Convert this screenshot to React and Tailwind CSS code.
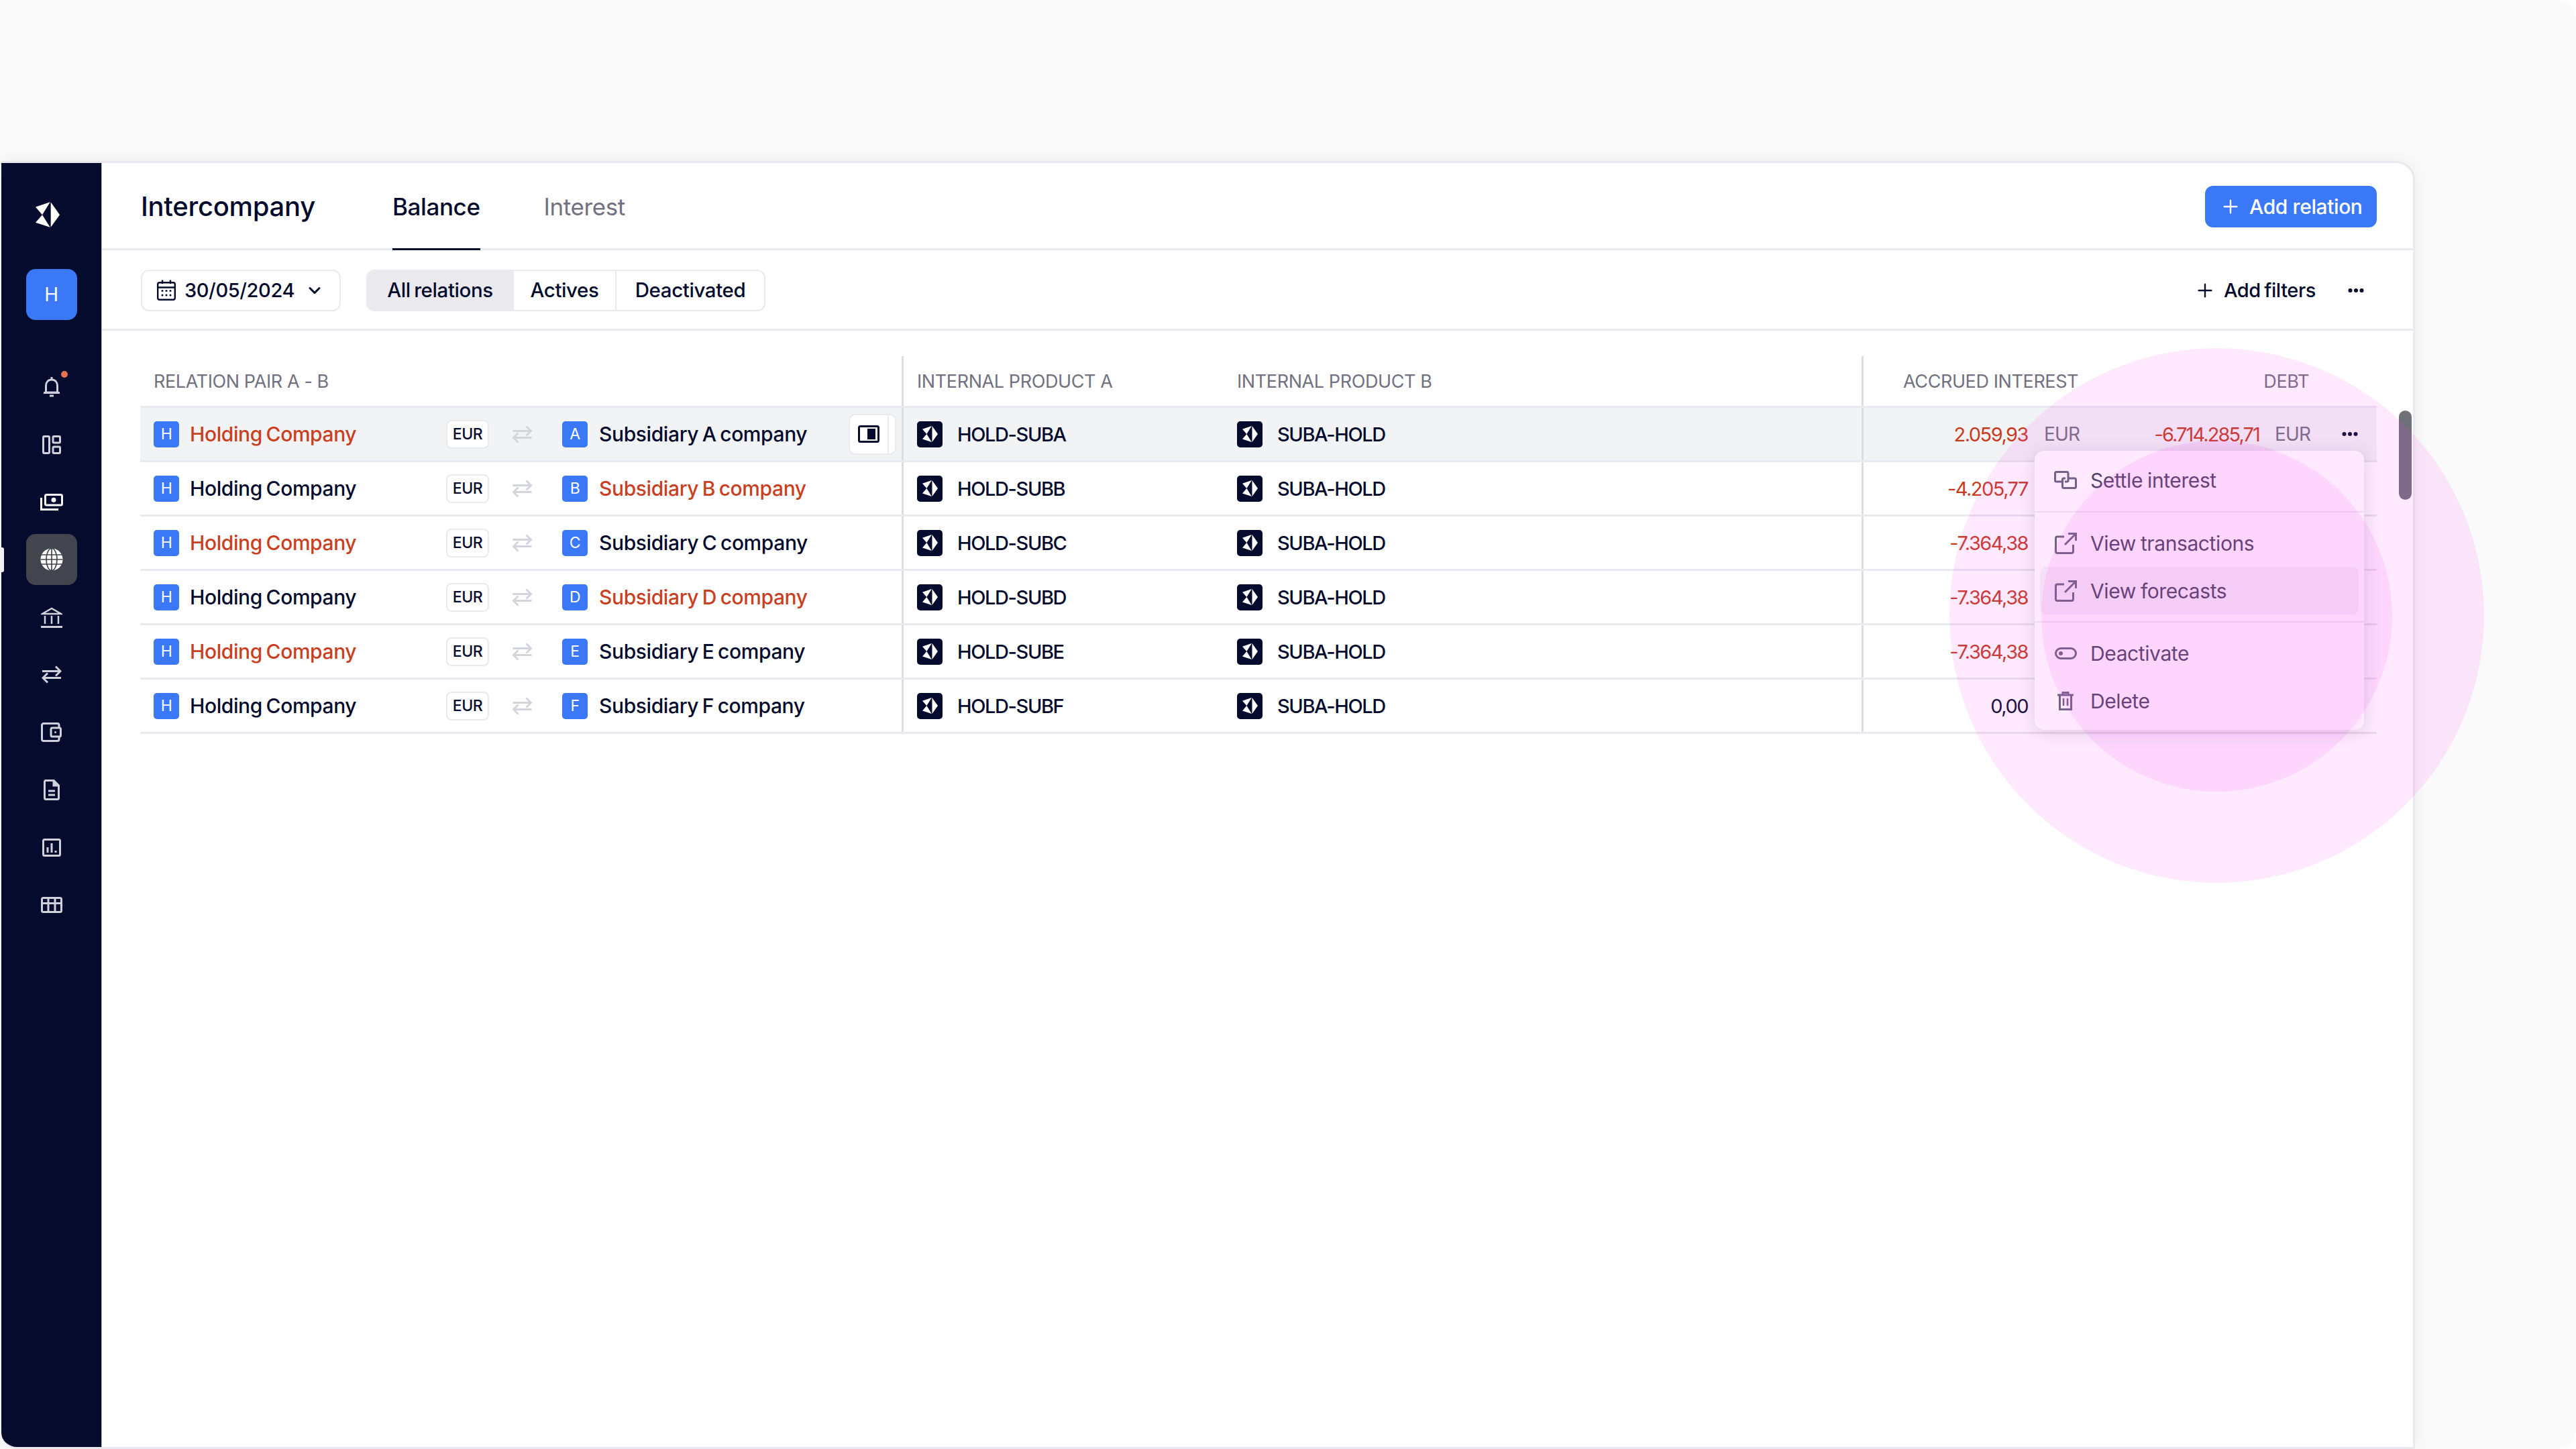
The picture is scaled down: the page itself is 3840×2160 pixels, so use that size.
import { ChevronDown, Plus } from 'lucide-react';

const rows = [
  { letter: 'A', code: 'HOLD-SUBA', redA: true, redB: false, amount: '2.059,93', red: true, hover: true },
  { letter: 'B', code: 'HOLD-SUBB', redA: false, redB: true, amount: '-4.205,77', red: true },
  { letter: 'C', code: 'HOLD-SUBC', redA: true, redB: false, amount: '-7.364,38', red: true },
  { letter: 'D', code: 'HOLD-SUBD', redA: false, redB: true, amount: '-7.364,38', red: true },
  { letter: 'E', code: 'HOLD-SUBE', redA: true, redB: false, amount: '-7.364,38', red: true },
  { letter: 'F', code: 'HOLD-SUBF', redA: false, redB: false, amount: '0,00', red: false },
];

function LogoMark({ className }) {
  return (
    <svg viewBox="0 0 108 113" className={className} fill="currentColor">
      <path d="M68 0L108 57L68 113Z" />
      <path d="M0 22L65 0L30 57Z" />
      <path d="M30 57L65 113L0 92Z" />
    </svg>
  );
}

function Dots({ className }) {
  return (
    <svg viewBox="0 0 24 6" className={className} fill="currentColor">
      <circle cx="3.5" cy="3" r="3" />
      <circle cx="12" cy="3" r="3" />
      <circle cx="20.5" cy="3" r="3" />
    </svg>
  );
}

function SwapArrows({ className }) {
  return (
    <svg viewBox="0 0 30 27" className={className} fill="none" stroke="currentColor" strokeWidth="3">
      <path d="M1 8.5H28M21 1.5L28 8.5L21 15.5" />
      <path d="M29 18.5H2M9 11.5L2 18.5L9 25.5" />
    </svg>
  );
}

function Badge({ children }) {
  return (
    <span className="flex h-[39px] w-[38px] shrink-0 items-center justify-center rounded-[5px] bg-[#3b78f7] text-[23px] font-normal text-white">
      {children}
    </span>
  );
}

function ProductCell({ code }) {
  return (
    <div className="flex items-center">
      <span className="flex h-[39px] w-[38px] shrink-0 items-center justify-center rounded-[5px] bg-[#040b2c] text-white">
        <LogoMark className="h-[24px] w-[23px]" />
      </span>
      <span className="ml-[22px] text-[29px] tracking-[-1.4px] text-[#040b2c]">{code}</span>
    </div>
  );
}

function NavIcon({ children }) {
  return <div className="flex h-[85.8px] w-[76px] items-center justify-center text-[#cfd0da]">{children}</div>;
}

function MenuItem({ icon, label, active }) {
  return (
    <div className={`mx-[8px] flex h-[71px] items-center rounded-[10px] pl-[21px] ${active ? 'bg-[#f4f4f6]' : ''}`}>
      <span className="flex w-[34px] justify-center text-[#5f6678]">{icon}</span>
      <span className="ml-[20px]">{label}</span>
    </div>
  );
}

function ExternalIcon() {
  return (
    <svg width="33" height="32" viewBox="0 0 33 32" fill="none" stroke="currentColor" strokeWidth="3">
      <path d="M14 6H4a2.5 2.5 0 0 0-2.5 2.5V28A2.5 2.5 0 0 0 4 30.500H25a2.500 2.500 0 0 0 2.500-2.500V18" />
      <path d="M15 18L31 2M20 1.500H31.500V12" />
    </svg>
  );
}

export default function App() {
  return (
    <div className="relative h-[2160px] w-[3840px] overflow-hidden rounded-r-[28px] bg-[#fafafa] pl-[2px] pt-[240px] font-[family-name:Inter,sans-serif] text-[30px] leading-none tracking-[-0.4px] text-[#040b2c] [word-spacing:-2px]">
      <div className="relative flex h-[1920px] w-[3598px] overflow-hidden rounded-bl-[24px] rounded-tr-[28px] border-y-[3px] border-r-[3px] border-[#e9e9ef] bg-white shadow-[0_0_24px_rgba(20,20,50,0.06)]">
        {/* sidebar */}
        <aside className="relative flex w-[150px] shrink-0 flex-col items-center border-r border-[#b9bac6] bg-[#040b2c]">
          <LogoMark className="ml-[-12px] mt-[58px] h-[38px] w-[36px] text-white" />
          <div className="mt-[62px] flex h-[76px] w-[76px] items-center justify-center rounded-[14px] bg-[#3b78f7] text-[28px] font-normal text-white">H</div>
          <div className="mt-[57px] flex flex-col">
            <NavIcon>
              <div className="relative">
                <svg width="26" height="32" viewBox="0 0 26 32" fill="none" stroke="currentColor" strokeWidth="3">
                  <path d="M13 5C7.500 5 4.500 9 4.500 14V24H21.500V14C21.500 9 18.500 5 13 5Z" />
                  <path d="M1 24.500H25M13 1V5M10 29H16" />
                </svg>
                <span className="absolute right-[-11px] top-[-8px] h-[10px] w-[10px] rounded-full bg-[#e8734f]" />
              </div>
            </NavIcon>
            <NavIcon>
              <svg width="28" height="28" viewBox="0 0 28 28" fill="none" stroke="currentColor" strokeWidth="3">
                <rect x="1.500" y="1.500" width="9" height="25" rx="1.500" />
                <rect x="16" y="1.500" width="10.500" height="9.500" rx="1.500" />
                <rect x="16" y="17" width="10.500" height="9.500" rx="1.500" />
              </svg>
            </NavIcon>
            <NavIcon>
              <svg width="34" height="25" viewBox="0 0 34 25" fill="none" stroke="#ffffff" strokeWidth="3">
                <rect x="7.500" y="1.500" width="25" height="15.500" rx="2" />
                <circle cx="20" cy="9.300" r="3.500" fill="#ffffff" stroke="none" />
                <path d="M1.500 6V23.500H27" />
              </svg>
            </NavIcon>
            <div className="flex h-[85.8px] w-[76px] items-center justify-center">
              <div className="flex h-[76px] w-[76px] items-center justify-center rounded-[14px] bg-[#42454e]">
                <svg width="34" height="34" viewBox="0 0 34 34" fill="none">
                  <circle cx="17" cy="17" r="16.500" fill="#ffffff" />
                  <g stroke="#42454e" strokeWidth="1.700">
                    <path d="M17 0.500V33.500M2 10H32M0.500 17H33.500M2 24H32" />
                    <ellipse cx="17" cy="17" rx="8" ry="16.500" />
                  </g>
                </svg>
              </div>
            </div>
            <NavIcon>
              <svg width="32" height="31" viewBox="0 0 32 31" fill="none" stroke="currentColor" strokeWidth="2.500">
                <path d="M2 10L16 2L30 10Z" />
                <path d="M6 13V25M16 13V25M26 13V25" />
                <path d="M0 29.500H32" strokeWidth="3" />
              </svg>
            </NavIcon>
            <NavIcon>
              <SwapArrows className="h-[27px] w-[30px]" />
            </NavIcon>
            <NavIcon>
              <svg width="31" height="29" viewBox="0 0 31 29" fill="none" stroke="currentColor" strokeWidth="3">
                <path d="M27 8V4A2.500 2.500 0 0 0 24.500 1.500H4A2.500 2.500 0 0 0 1.500 4V25A2.500 2.500 0 0 0 4 27.500H24.500A2.500 2.500 0 0 0 27 25V21" />
                <rect x="15" y="8" width="14.500" height="13" rx="2" />
                <circle cx="21.500" cy="14.500" r="1.500" fill="currentColor" stroke="none" />
              </svg>
            </NavIcon>
            <NavIcon>
              <svg width="24" height="31" viewBox="0 0 24 31" fill="none" stroke="currentColor" strokeWidth="3">
                <path d="M15 1.500H3A1.500 1.500 0 0 0 1.500 3V28A1.500 1.500 0 0 0 3 29.500H21A1.500 1.500 0 0 0 22.500 28V9Z" />
                <path d="M15 1.500L22.500 9H15Z" fill="currentColor" />
                <path d="M7 17H17M7 23H17" />
              </svg>
            </NavIcon>
            <NavIcon>
              <svg width="28" height="27" viewBox="0 0 28 27" fill="none" stroke="currentColor" strokeWidth="3">
                <rect x="1.500" y="1.500" width="25" height="24" rx="2" />
                <path d="M8 21V13M14 21V7M20 21V18" />
              </svg>
            </NavIcon>
            <NavIcon>
              <svg width="32" height="24" viewBox="0 0 32 24" fill="none" stroke="currentColor" strokeWidth="3">
                <rect x="1.500" y="1.500" width="29" height="21" rx="2" />
                <path d="M1.500 9.500H30.500M11 9.500V22.500M21 9.500V22.500M11 1.500V9.500M21 1.500V9.500" />
              </svg>
            </NavIcon>
          </div>
          <span className="absolute left-0 top-[573px] h-[37px] w-[4px] rounded-r-[3px] bg-[#f0f0f5]" />
        </aside>

        <main className="relative min-w-0 flex-1">
          {/* title + tabs */}
          <div className="flex h-[130px] items-center border-b-[3px] border-[#e9e9ef] pl-[58px] pr-[54px] pt-[3px]">
            <h1 className="w-[375px] text-[40px] font-medium tracking-[-0.3px]">Intercompany</h1>
            <div className="flex h-full items-center text-[35px]">
              <div className="relative flex h-full items-center font-medium">
                Balance
                <span className="absolute inset-x-0 bottom-[-3px] h-[3px] bg-[#040b2c]" />
              </div>
              <div className="ml-[95px] text-[#71717f]">Interest</div>
            </div>
            <button className="ml-auto flex h-[62px] w-[256px] items-center rounded-[12px] bg-[#3b78f7] pl-[22px] font-medium text-white">
              <Plus size={32} strokeWidth={1.8} />
              <span className="ml-[12px]">Add relation</span>
            </button>
          </div>

          {/* toolbar */}
          <div className="flex h-[120px] items-center border-b-[3px] border-[#e9e9ef] pl-[58px] pr-[54px] pt-[2px] text-[29.5px]">
            <div className="flex h-[62px] w-[298px] items-center rounded-[12px] border-[2px] border-[#e9e9ef] pl-[22px]">
              <svg width="28" height="31" viewBox="0 0 28 31" fill="none" stroke="currentColor" strokeWidth="2.400">
                <rect x="1.200" y="4.200" width="25.600" height="25.600" rx="2.500" />
                <path d="M1.200 11.500H26.800M8 0.500V6M20 0.500V6" />
                <g fill="currentColor" stroke="none">
                  <circle cx="8" cy="16.500" r="1.500" />
                  <circle cx="14" cy="16.500" r="1.500" />
                  <circle cx="20" cy="16.500" r="1.500" />
                  <circle cx="8" cy="23" r="1.500" />
                  <circle cx="14" cy="23" r="1.500" />
                  <circle cx="20" cy="23" r="1.500" />
                </g>
              </svg>
              <span className="ml-[13px] text-[29px] font-medium tracking-[-0.4px]">30/05/2024</span>
              <ChevronDown size={28} strokeWidth={2.6} className="ml-[16px]" />
            </div>
            <div className="ml-[38px] flex h-[62px] items-stretch rounded-[12px] border-[2px] border-[#e9e9ef] font-medium">
              <div className="flex w-[216px] items-center justify-center rounded-l-[10px] bg-[#e9e9ee]">All relations</div>
              <div className="flex w-[153px] items-center justify-center border-l-[2px] border-[#e9e9ef]">Actives</div>
              <div className="flex w-[222px] items-center justify-center border-l-[2px] border-[#e9e9ef]">Deactivated</div>
            </div>
            <div className="ml-auto flex items-center text-[29px] font-medium">
              <Plus size={32} strokeWidth={1.8} />
              <span className="ml-[12px]">Add filters</span>
              <Dots className="ml-[48px] mr-[19px] h-[6px] w-[24px]" />
            </div>
          </div>

          {/* table */}
          <div className="ml-[57px] mr-[54px] mt-[38px]">
            <div className="grid h-[74px] grid-cols-[1138px_1431px_1fr] text-[27px] font-normal tracking-[-0.4px] text-[#71717f] [word-spacing:0px]">
              <div className="flex items-center border-r-[3px] border-[#dcdce3] pl-[20px]">RELATION PAIR A - B</div>
              <div className="flex items-center border-r-[3px] border-[#dcdce3] pl-[20px]">
                <span className="w-[477px]">INTERNAL PRODUCT A</span>
                <span>INTERNAL PRODUCT B</span>
              </div>
              <div className="flex items-center pl-[59px]">
                <span>ACCRUED INTEREST</span>
                <span className="ml-auto mr-[101px]">DEBT</span>
              </div>
            </div>

            <div className="border-b-[3px] border-[#e9e9ef]">
              {rows.map((row) => (
                <div
                  key={row.letter}
                  className={`grid h-[81px] grid-cols-[1138px_1431px_1fr] border-t-[3px] border-[#e9e9ef] font-medium ${row.hover ? 'bg-[#f2f3f5]' : ''}`}
                >
                  <div className="flex items-center border-r-[3px] border-[#dcdce3] pl-[20px]">
                    <Badge>H</Badge>
                    <span className={`ml-[16px] w-[382px] ${row.redA ? 'text-[#c8401f]' : ''}`}>Holding Company</span>
                    <span className="flex h-[43px] w-[64px] items-center justify-center rounded-[8px] border-[2px] border-[#e9e9ef] bg-white text-[23px]">EUR</span>
                    <SwapArrows className="ml-[34px] h-[27px] w-[31px] text-[#d4d4dc]" />
                    <span className="ml-[44px]"><Badge>{row.letter}</Badge></span>
                    <span className={`ml-[17px] ${row.redB ? 'text-[#c8401f]' : ''}`}>Subsidiary {row.letter} company</span>
                    {row.hover && (
                      <span className="ml-auto mr-[8px] flex h-[61px] w-[71px] rounded-[10px] border-[2px] border-[#e9e9ef] bg-white">
                        <span className="flex w-[58px] items-center justify-center border-r-[2px] border-[#e9e9ef]">
                          <svg width="32" height="26" viewBox="0 0 32 26" fill="none">
                            <rect x="1.500" y="1.500" width="29" height="23" rx="2" stroke="#040b2c" strokeWidth="3" />
                            <rect x="14" y="5" width="12" height="16" fill="#040b2c" />
                          </svg>
                        </span>
                      </span>
                    )}
                  </div>
                  <div className="flex items-center border-r-[3px] border-[#dcdce3] pl-[20px]">
                    <div className="w-[477px]"><ProductCell code={row.code} /></div>
                    <ProductCell code="SUBA-HOLD" />
                  </div>
                  <div className="flex items-center text-[29px] font-normal tracking-[-1.5px]">
                    <span className={`w-[245px] text-right ${row.red ? 'text-[#c73a20]' : ''}`}>{row.amount}</span>
                    {row.hover && (
                      <>
                        <span className="ml-[24px] w-[52px] text-[28px] tracking-[-0.8px] text-[#71717f]">EUR</span>
                        <span className="ml-[1px] w-[268px] text-right tracking-[-1.900px] text-[#c73a20]">-6.714.285,71</span>
                        <span className="ml-[23px] w-[52px] text-[28px] tracking-[-0.8px] text-[#71717f]">EUR</span>
                        <Dots className="ml-[48px] h-[6px] w-[24px] text-[#040b2c]" />
                      </>
                    )}
                  </div>
                </div>
              ))}
            </div>
          </div>

          {/* scrollbar */}
          <div className="absolute left-[3424px] top-[369px] h-[133px] w-[19px] rounded-full bg-[#6f7078]" />

          {/* row actions menu */}
          <div className="absolute left-[2881px] top-[429px] w-[491px] rounded-[14px] bg-white text-[#3f4358] shadow-[0_4px_24px_rgba(20,20,50,0.14)] [word-spacing:-1px]">
            <div className="pb-[11px] pt-[8px]">
              <MenuItem
                label="Settle interest"
                icon={
                  <svg width="34" height="27" viewBox="0 0 34 27" fill="none" stroke="currentColor" strokeWidth="3">
                    <path d="M12 16H3.500A2 2 0 0 1 1.500 14V3.500A2 2 0 0 1 3.500 1.500H19A2 2 0 0 1 21 3.500V14A2 2 0 0 1 19 16H16" />
                    <path d="M22 11H30.500A2 2 0 0 1 32.500 13V23.500A2 2 0 0 1 30.500 25.500H14.500A2 2 0 0 1 12.500 23.500V13A2 2 0 0 1 14.500 11H17" />
                  </svg>
                }
              />
            </div>
            <div className="border-y-[2px] border-[#ececf0] py-[10px]">
              <MenuItem label="View transactions" icon={<ExternalIcon />} />
              <MenuItem label="View forecasts" icon={<ExternalIcon />} active />
            </div>
            <div className="pb-[8px] pt-[10px]">
              <MenuItem
                label="Deactivate"
                icon={
                  <svg width="33" height="18" viewBox="0 0 33 18" fill="none" stroke="currentColor" strokeWidth="3">
                    <rect x="1.500" y="1.500" width="30" height="15" rx="7.500" />
                    <circle cx="9" cy="9" r="3" fill="currentColor" stroke="none" />
                  </svg>
                }
              />
              <MenuItem
                label="Delete"
                icon={
                  <svg width="24" height="28" viewBox="0 0 24 28" fill="none" stroke="currentColor" strokeWidth="3">
                    <path d="M0 5H24M8 5V1.500H16V5M3.500 5V26.500H20.500V5" />
                    <path d="M9 10V21M15 10V21" strokeWidth="2.500" />
                  </svg>
                }
              />
            </div>
          </div>
        </main>
      </div>

      {/* pink highlight rings around the menu */}
      <div className="pointer-events-none absolute left-[2906px] top-[519px] h-[797px] w-[797px] rounded-full bg-[#f542f5]/[0.116]" />
      <div className="pointer-events-none absolute left-[3043px] top-[657px] h-[523px] w-[523px] rounded-full bg-[#f542f5]/[0.116]" />
    </div>
  );
}
